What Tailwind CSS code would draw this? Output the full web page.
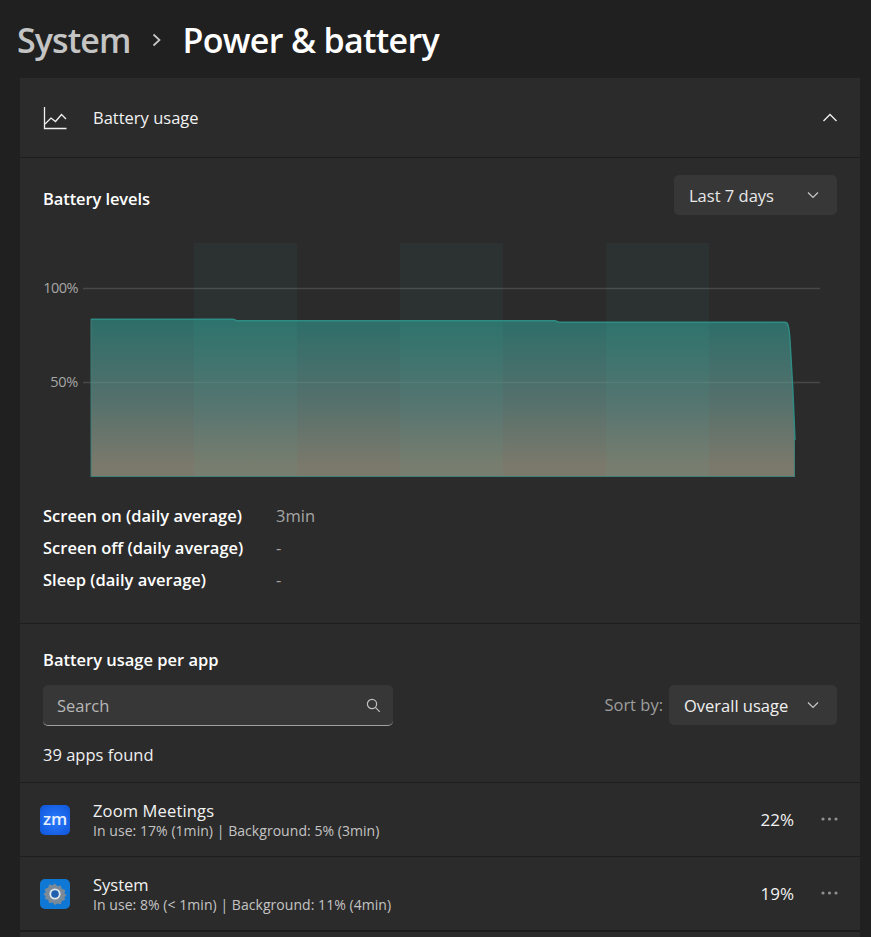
<!DOCTYPE html>
<html lang="en">
<head>
    <meta charset="UTF-8">
    <meta name="viewport" content="width=device-width, initial-scale=1.0">
    <title>Power &amp; battery</title>
    <script src="https://cdn.jsdelivr.net/npm/@tailwindcss/browser@4"></script>
</head>
<body class="antialiased bg-[#202020] text-white font-['Open_Sans','Noto_Sans',sans-serif] h-[937px] w-[871px] overflow-hidden">
    <!-- Breadcrumb -->
    <div class="h-[78px] pl-[17px] flex items-start pt-[16px] text-[34px] leading-[48px] font-semibold tracking-[-0.68px]">
        <span class="text-[#c4c4c4] tracking-[-0.9px]">System</span>
        <svg class="w-[12px] h-[14px] ml-[20px] mr-[20px] mt-[17px]" viewBox="0 0 12 14" fill="none" stroke="#c8c8c8" stroke-width="1.7"><path d="M2.5 1.5l6 5.5-6 5.5"/></svg>
        <span>Power &amp; battery</span>
    </div>

    <!-- Card -->
    <div class="ml-[20px] w-[840px] bg-[#2b2b2b]">
        <!-- Header -->
        <div class="h-[80px] border-b border-[#1d1d1d] flex items-center pl-[23px] pr-[22px]">
            <svg class="w-[24px] h-[24px]" viewBox="0 0 24 24" fill="none" stroke="#f0f0f0" stroke-width="1.3"><path d="M1.5 1v21.5h22"/><path d="M2 18l6-6 4.5 3.5 6-7 4.5 4.5"/></svg>
            <span class="ml-[26px] mt-[1px] text-[16.5px] text-[#f2f2f2]">Battery usage</span>
            <svg class="ml-auto w-[16px] h-[10px]" viewBox="0 0 16 10" fill="none" stroke="#f0f0f0" stroke-width="1.3"><path d="M1.5 8L8 1.5 14.5 8"/></svg>
        </div>

        <!-- Battery levels -->
        <div class="h-[466px] border-b border-[#1d1d1d] pl-[23px] pr-[23px]">
            <div class="h-[82px] flex items-start justify-between pt-[17px]">
                <span class="mt-[13px] text-[16.5px] leading-[22px] font-semibold tracking-[-0.1px]">Battery levels</span>
                <div class="w-[163px] h-[40px] rounded-[5px] bg-[#373737] flex items-center pl-[15px] pr-[18px] pt-[2px] text-[16.5px] text-[#e8e8e8]">
                    Last 7 days
                    <svg class="ml-auto w-[12px] h-[8px] -mt-[2px]" viewBox="0 0 12 8" fill="none" stroke="#c8c8c8" stroke-width="1.2"><path d="M1 1.5l5 5 5-5"/></svg>
                </div>
            </div>

            <!-- Chart: canvas x 20..860, y 240..480 -->
            <div class="relative -ml-[23px] w-[840px] h-[240px]">
                <svg class="absolute inset-0" width="840" height="240" viewBox="20 240 840 240" fill="none">
                    <defs>
                        <linearGradient id="fillArea" x1="0" y1="319" x2="0" y2="477" gradientUnits="userSpaceOnUse">
                            <stop offset="0" stop-color="#2d6e69"/>
                            <stop offset="0.5" stop-color="#53706c"/>
                            <stop offset="0.92" stop-color="#7a796b"/>
                            <stop offset="1" stop-color="#7a796b"/>
                        </linearGradient>
                    </defs>
                    <path d="M83 288.5H820M83 382.5H820" stroke="#484848" stroke-width="1.6"/>
                    <path d="M91 319H233L237 320.5H555L559 322H785C788 322 789 326 790 340C792 370 794 410 795 440V477H91Z" fill="url(#fillArea)"/>
                    <path d="M91 382.5H792" stroke="#ffffff" stroke-opacity="0.07" stroke-width="1.6"/>
                    <path d="M194 243h103v234h-103zM400 243h103v234h-103zM606 243h103v234h-103z" fill="#38ffe8" fill-opacity="0.035"/>
                    <path d="M91 477V319" stroke="#3f7f7a" stroke-width="1"/>
                    <path d="M91 476.5H794.5V438" stroke="#3f7f7a" stroke-width="1"/>
                    <path d="M91 319.2H233L237 320.7H555L559 322.2H785C788 322.2 789 326 790 340C792 370 794 410 795 440" stroke="#2f8c84" stroke-width="1.4"/>
                </svg>
                <span class="absolute right-[782px] top-[38px] text-[14.5px] leading-[20px] tracking-[-0.5px] text-[#a6a6a6]">100%</span>
                <span class="absolute right-[782px] top-[132px] text-[14.5px] leading-[20px] tracking-[-0.3px] text-[#a6a6a6]">50%</span>
            </div>

            <!-- Averages -->
            <div class="grid grid-cols-[233px_1fr] auto-rows-[32px] mt-[20px] text-[16.5px] leading-[32px]">
                <span class="font-semibold">Screen on (daily average)</span><span class="text-[#a6a6a6]">3min</span>
                <span class="font-semibold">Screen off (daily average)</span><span class="text-[#a6a6a6]">-</span>
                <span class="font-semibold">Sleep (daily average)</span><span class="text-[#a6a6a6]">-</span>
            </div>
        </div>

        <!-- Battery usage per app -->
        <div class="h-[159px] border-b border-[#1d1d1d] pl-[23px] pr-[23px]">
            <div class="pt-[25px] text-[16.5px] leading-[22px] font-semibold">Battery usage per app</div>
            <div class="mt-[14px] flex items-center justify-between">
                <div class="w-[350px] h-[41px] rounded-[5px] bg-[#373737] border-b border-[#a0a0a0] flex items-center pl-[14px] pr-[12px] pt-[2px] text-[16.5px] text-[#b8b8b8]">
                    Search
                    <svg class="ml-auto w-[15px] h-[15px] -mt-[2px]" viewBox="0 0 15 15" fill="none" stroke="#c0c0c0" stroke-width="1.2"><circle cx="6" cy="6" r="4.6"/><path d="M9.4 9.4l4.4 4.4"/></svg>
                </div>
                <div class="flex items-center -mt-[2px]">
                    <span class="text-[16.5px] text-[#9e9e9e] mr-[6px] mt-[1px]">Sort by:</span>
                    <div class="w-[168px] h-[40px] rounded-[5px] bg-[#373737] flex items-center pl-[15px] pr-[18px] pt-[3px] text-[16.5px] text-[#f0f0f0]">
                        Overall usage
                        <svg class="ml-auto w-[12px] h-[8px] -mt-[3px]" viewBox="0 0 12 8" fill="none" stroke="#c8c8c8" stroke-width="1.2"><path d="M1 1.5l5 5 5-5"/></svg>
                    </div>
                </div>
            </div>
            <div class="mt-[18px] text-[16.5px] leading-[22px] text-[#f0f0f0]">39 apps found</div>
        </div>

        <!-- App rows -->
        <div class="h-[74px] border-b border-[#1d1d1d] flex items-center pl-[20px] pr-[22px]">
            <div class="w-[30px] h-[30px] rounded-[5px] bg-[radial-gradient(circle,#2a7bff_0%,#0f55d8_100%)] flex items-center justify-center text-[17px] leading-[15px] font-semibold tracking-[-0.2px] text-[#e6efff] pb-[3px]">zm</div>
            <div class="ml-[23px] mt-[1px]">
                <div class="text-[16.5px] leading-[22px] tracking-[0.15px] text-[#f2f2f2]">Zoom Meetings</div>
                <div class="text-[14px] leading-[18px] tracking-[0.05px] text-[#c4c4c4]">In use: 17% (1min) | Background: 5% (3min)</div>
            </div>
            <span class="ml-auto text-[17px] text-[#f2f2f2]">22%</span>
            <svg class="ml-[27px] w-[17px] h-[4px] -mt-[2px]" viewBox="0 0 17 4" fill="#8f8f8f"><circle cx="2" cy="2" r="1.6"/><circle cx="8.5" cy="2" r="1.6"/><circle cx="15" cy="2" r="1.6"/></svg>
        </div>
        <div class="h-[75px] border-b-2 border-[#1d1d1d] flex items-center pl-[20px] pr-[22px]">
            <svg class="w-[30px] h-[30px]" viewBox="0 0 30 30">
                <rect width="30" height="30" rx="5" fill="#0f78d4"/>
                <path d="M15 4.5l2.4 2.7 3.4-.7 1 3.3 3.4 1.1-.8 3.4 2.2 1.7-2.2 2.4-.0 0 .8 2.4-3.4 1.1-1 3.3-3.4-.7L15 26l-2.4-2.5-3.4.7-1-3.3-3.4-1.1.8-2.4-2.2-2.4 2.2-1.7-.8-3.4 3.4-1.1 1-3.3 3.4.7z" fill="#7b8a99"/>
                <circle cx="15" cy="15" r="5.6" fill="#dfe6ec"/>
                <circle cx="15" cy="15" r="3.8" fill="#1f5fae"/>
            </svg>
            <div class="ml-[23px] mt-[1px]">
                <div class="text-[16.5px] leading-[22px] text-[#f2f2f2]">System</div>
                <div class="text-[14px] leading-[18px] tracking-[0.05px] text-[#c4c4c4]">In use: 8% (&lt; 1min) | Background: 11% (4min)</div>
            </div>
            <span class="ml-auto text-[17px] text-[#f2f2f2]">19%</span>
            <svg class="ml-[27px] w-[17px] h-[4px] -mt-[2px]" viewBox="0 0 17 4" fill="#8f8f8f"><circle cx="2" cy="2" r="1.6"/><circle cx="8.5" cy="2" r="1.6"/><circle cx="15" cy="2" r="1.6"/></svg>
        </div>
        <div class="h-[10px]"></div>
    </div>
</body>
</html>
